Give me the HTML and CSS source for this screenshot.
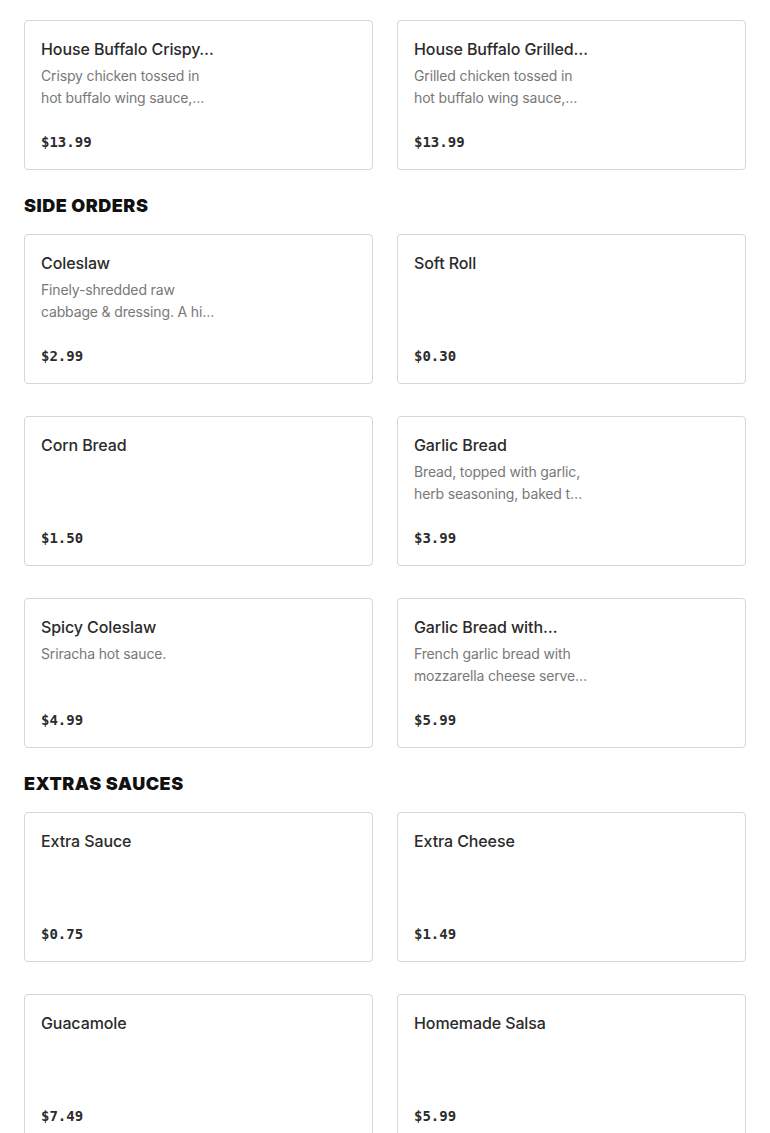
FILE: index.html
```html
<!DOCTYPE html>
<html>
<head>
<meta charset="utf-8">
<link rel="stylesheet" href="styles.css">
</head>
<body>
<div class="page">
  <div class="grid">
    <div class="card"><div class="title">House Buffalo Crispy…</div><div class="desc">Crispy chicken tossed in<br>hot buffalo wing sauce,…</div><div class="price">$13.99</div></div>
    <div class="card"><div class="title">House Buffalo Grilled…</div><div class="desc">Grilled chicken tossed in<br>hot buffalo wing sauce,…</div><div class="price">$13.99</div></div>
  </div>

  <h2 class="section">SIDE ORDERS</h2>
  <div class="grid">
    <div class="card"><div class="title">Coleslaw</div><div class="desc">Finely-shredded raw<br>cabbage &amp; dressing. A hi…</div><div class="price">$2.99</div></div>
    <div class="card"><div class="title">Soft Roll</div><div class="desc"></div><div class="price">$0.30</div></div>
    <div class="card"><div class="title">Corn Bread</div><div class="desc"></div><div class="price">$1.50</div></div>
    <div class="card"><div class="title">Garlic Bread</div><div class="desc">Bread, topped with garlic,<br>herb seasoning, baked t…</div><div class="price">$3.99</div></div>
    <div class="card"><div class="title">Spicy Coleslaw</div><div class="desc">Sriracha hot sauce.</div><div class="price">$4.99</div></div>
    <div class="card"><div class="title">Garlic Bread with…</div><div class="desc">French garlic bread with<br>mozzarella cheese serve…</div><div class="price">$5.99</div></div>
  </div>

  <h2 class="section">EXTRAS SAUCES</h2>
  <div class="grid">
    <div class="card"><div class="title">Extra Sauce</div><div class="desc"></div><div class="price">$0.75</div></div>
    <div class="card"><div class="title">Extra Cheese</div><div class="desc"></div><div class="price">$1.49</div></div>
    <div class="card"><div class="title">Guacamole</div><div class="desc"></div><div class="price">$7.49</div></div>
    <div class="card"><div class="title">Homemade Salsa</div><div class="desc"></div><div class="price">$5.99</div></div>
  </div>
</div>
</body>
</html>
```
FILE: styles.css
```css
html, body {
  margin: 0;
  padding: 0;
  background: #ffffff;
}
.page {
  padding: 20px 24px 0 24px;
}
.grid {
  display: grid;
  grid-template-columns: 1fr 1fr;
  column-gap: 24px;
  row-gap: 32px;
}
.card {
  box-sizing: border-box;
  height: 150px;
  border: 1px solid #d6d6d6;
  border-radius: 4px;
  padding: 16px 16px 17px 16px;
  display: flex;
  flex-direction: column;
}
.title {
  font-family: "Inter", "Noto Sans", sans-serif;
  font-size: 16px;
  font-weight: 500;
  line-height: 24px;
  color: #2b2b2b;
  white-space: nowrap;
  letter-spacing: -0.1px;
}
.desc {
  margin-top: 4px;
  font-family: "Inter", "Noto Sans", sans-serif;
  font-size: 14px;
  line-height: 22px;
  color: #787878;
  white-space: nowrap;
  letter-spacing: -0.15px;
}
.price {
  margin-top: auto;
  font-family: "DejaVu Sans Mono", "Liberation Mono", monospace;
  font-size: 14px;
  font-weight: bold;
  line-height: 20px;
  color: #2b2b2b;
}
.section {
  margin: 23px 0 15px 0;
  font-family: "Inter", "Lato", sans-serif;
  font-size: 18px;
  font-weight: 900;
  line-height: 26px;
  color: #111111;
  letter-spacing: 0.5px;
}
```
